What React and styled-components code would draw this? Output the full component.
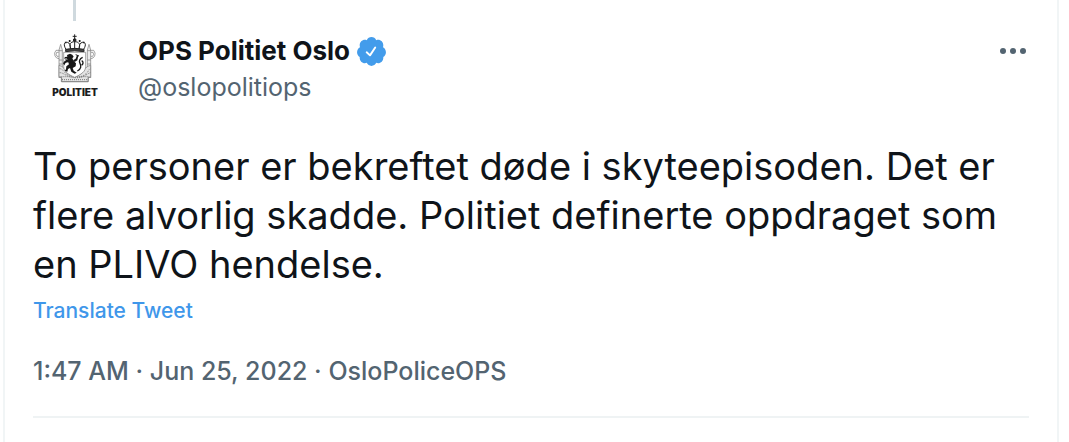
import React from "react";
import styled, { createGlobalStyle } from "styled-components";

const GlobalStyle = createGlobalStyle`
  * { box-sizing: border-box; }
  body {
    margin: 0;
    background: #fff;
    color: #0f1419;
    font-family: Inter, "Liberation Sans", sans-serif;
  }
`;

const Tweet = styled.article`
  margin: 0 10px 0 3px;
  padding: 0 28px 24px;
  border: solid #f1f5f6;
  border-width: 0 2px;
`;

const ThreadLine = styled.div`
  width: 3px;
  height: 21px;
  margin-left: 40px;
  background: #cfd9de;
`;

const Header = styled.header`
  display: flex;
  align-items: flex-start;
  gap: 21px;
  padding-top: 12px;
`;

const Avatar = styled.a`
  display: flex;
  flex-direction: column;
  align-items: center;
  flex: none;
  width: 84px;
  height: 84px;
  padding-top: 1px;
  color: #1c1c1c;
  text-decoration: none;
`;

const AvatarLabel = styled.span`
  font-size: 10px;
  line-height: 16px;
  font-weight: 900;
`;

const Author = styled.div`
  flex: 1;
  min-width: 0;
`;

const NameRow = styled.div`
  display: flex;
  align-items: center;
  gap: 5px;
  height: 36px;
`;

const Name = styled.a`
  color: #0f1419;
  font-size: 26px;
  line-height: 36px;
  font-weight: 700;
  text-decoration: none;
`;

const Handle = styled.a`
  display: block;
  color: #536471;
  font-size: 25px;
  line-height: 36px;
  text-decoration: none;
`;

const MoreButton = styled.button`
  display: flex;
  padding: 0;
  margin-top: 4px;
  border: 0;
  background: none;
  color: #536471;
  cursor: pointer;
`;

const Body = styled.p`
  margin: 25px 0 0;
  font-size: 38px;
  line-height: 49px;
`;

const Translate = styled.button`
  display: block;
  padding: 0;
  margin-top: 6px;
  border: 0;
  background: none;
  color: #3f97ea;
  font: inherit;
  font-size: 21px;
  font-weight: 500;
  line-height: 32px;
  cursor: pointer;
`;

const Meta = styled.div`
  margin-top: 26px;
  padding-bottom: 27px;
  border-bottom: 2px solid #eff3f4;
  color: #536471;
  font-size: 25px;
  font-weight: 500;
  line-height: 36px;
`;

const MetaLink = styled.a`
  color: inherit;
  text-decoration: none;
`;

function Crest() {
  return (
    <svg width="44" height="50" viewBox="0 0 132 150" fill="none" aria-hidden="true">
      {/* crown */}
      <g stroke="#222" strokeWidth="3">
        <path d="M65 1v14M59 7h12" />
        <circle cx="65" cy="18" r="4" fill="#222" />
        <path d="M39 46C30 31 34 24 43 25c8 1 9 10 10 20M92 46c9-15 5-22-4-21-8 1-9 10-10 20M53 45c-5-14-1-22 12-22s18 8 13 22M65 22v24" />
        <path d="M38 46q27-6 55 0v7q-28-5-55 0z" fill="#444" />
        <path d="M38 23v5M50 18v6M80 18v6M92 23v5" strokeWidth="5" />
      </g>
      {/* fasces and oak ornament */}
      <g stroke="#777" strokeWidth="2">
        <path d="M18 132V48l5-17 5 17v84M103 132V48l5-17 5 17v84" fill="#eee" />
        <path d="M18 50h10M18 78h10M18 90h10M18 102h10M18 114h10M103 50h10M103 78h10M103 90h10M103 102h10M103 114h10" />
        <path d="M18 49H9q-7 8-3 17 4 8 12 8M17 55h-6q-4 6 1 12h5M113 49h9q7 8 3 17-4 8-12 8M114 55h6q4 6-1 12h-5" />
        <path d="M18 94c10 2 18 10 22 19 6 8 16 10 25 14 9-4 19-6 25-14 4-9 12-17 23-19v34l-7 3v12H25v-12l-7-3z" fill="#e4e4e4" />
      </g>
      <g stroke="#777" strokeWidth="3" strokeDasharray="3 3">
        <path d="M20 104c13 1 15 18 29 20s25 10 43 0 12-18 20-19M20 116c14 0 18 13 45 15s32-9 47-15M23 128h85M27 137h77" />
      </g>
      <path d="M18 130h8v13h79v-13h8" stroke="#777" strokeWidth="2" />
      {/* shield */}
      <path d="M32 55h66v42c0 16-13 24-33 33-20-9-33-17-33-33z" fill="#fff" stroke="#777" strokeWidth="2" />
      {/* lion with axe */}
      <g fill="#181818">
        <path d="M42 63l9-4 7 3 4 6-4 5 4 8 7 7-1 9-9 5 3 8 9 6-6 3-10-6-4-11-6 3-2 8-8-3 4-4 1-9 8-6-3-8-8 5-3 6-4-6 5-7 9-5-5-3-6 1 3-5 7-1z" />
        <path d="M60 79l8-5 4-10 4 1-3 14-8 5z" />
      </g>
      <path d="M73 111c12-5 12-16 8-23-4-7-1-14 8-18M86 80c6 3 5 10 0 14" stroke="#181818" strokeWidth="4" />
      <path d="M38 74l5 11M68 62l10 4" stroke="#181818" strokeWidth="3" />
    </svg>
  );
}

function VerifiedBadge() {
  return (
    <svg width="33" height="33" viewBox="0 0 24 24" role="img" aria-label="Verified account">
      <path
        fill="#439ceb"
        d="M22.5 12.5c0-1.58-.875-2.95-2.148-3.6.154-.435.238-.905.238-1.4 0-2.21-1.71-3.998-3.818-3.998-.47 0-.92.084-1.336.25C14.818 2.415 13.51 1.5 12 1.5s-2.816.917-3.437 2.25c-.415-.165-.866-.25-1.336-.25-2.11 0-3.818 1.79-3.818 4 0 .494.083.964.237 1.4-1.272.65-2.147 2.018-2.147 3.6 0 1.495.782 2.798 1.942 3.486-.02.17-.032.34-.032.514 0 2.21 1.708 4 3.818 4 .47 0 .92-.086 1.335-.25.62 1.334 1.926 2.25 3.437 2.25 1.512 0 2.818-.916 3.437-2.25.415.163.865.248 1.336.248 2.11 0 3.818-1.79 3.818-4 0-.174-.012-.344-.033-.513 1.158-.687 1.943-1.99 1.943-3.484z"
      />
      <path d="M8.5 12.6l2.4 2.2 3.8-5.7" fill="none" stroke="#fff" strokeWidth="1.4" strokeLinecap="round" strokeLinejoin="round" />
    </svg>
  );
}

export default function App() {
  return (
    <>
      <GlobalStyle />
      <Tweet>
        <ThreadLine />
        <Header>
          <Avatar href="#profile" aria-label="OPS Politiet Oslo">
            <Crest />
            <AvatarLabel>POLITIET</AvatarLabel>
          </Avatar>
          <Author>
            <NameRow>
              <Name href="#profile">OPS Politiet Oslo</Name>
              <VerifiedBadge />
            </NameRow>
            <Handle href="#profile">@oslopolitiops</Handle>
          </Author>
          <MoreButton type="button" aria-label="More">
            <svg width="32" height="28" viewBox="0 0 32 28" fill="currentColor" aria-hidden="true">
              <circle cx="6" cy="14" r="3" />
              <circle cx="16" cy="14" r="3" />
              <circle cx="26" cy="14" r="3" />
            </svg>
          </MoreButton>
        </Header>
        <Body>
          To personer er bekreftet døde i skyteepisoden. Det er flere alvorlig skadde. Politiet definerte
          oppdraget som en PLIVO hendelse.
        </Body>
        <Translate type="button">Translate Tweet</Translate>
        <Meta>
          <MetaLink href="#status">1:47 AM · Jun 25, 2022</MetaLink> · <MetaLink href="#source">OsloPoliceOPS</MetaLink>
        </Meta>
      </Tweet>
    </>
  );
}
